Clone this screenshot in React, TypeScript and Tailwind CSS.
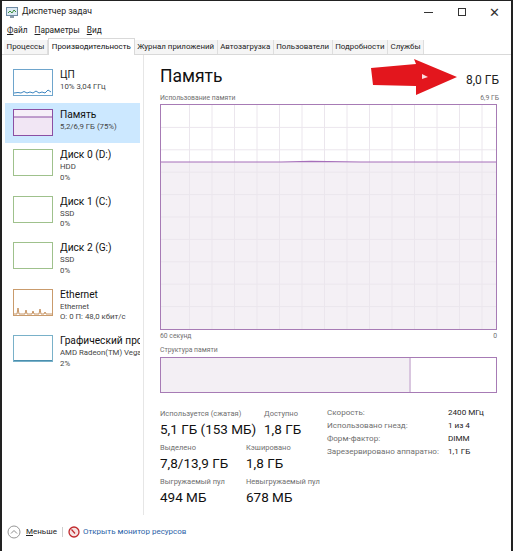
import React from 'react';

type Side = {
  title: string;
  lines: string[];
  color: string;
  kind: 'cpu' | 'mem' | 'flat' | 'net' | 'gpu';
  active?: boolean;
};

const sideItems: Side[] = [
  { title: 'ЦП', lines: ['10% 3,04 ГГц'], color: '#6ea5cc', kind: 'cpu' },
  { title: 'Память', lines: ['5,2/6,9 ГБ (75%)'], color: '#8b4fa3', kind: 'mem', active: true },
  { title: 'Диск 0 (D:)', lines: ['HDD', '0%'], color: '#9fc18c', kind: 'flat' },
  { title: 'Диск 1 (C:)', lines: ['SSD', '0%'], color: '#9fc18c', kind: 'flat' },
  { title: 'Диск 2 (G:)', lines: ['SSD', '0%'], color: '#9fc18c', kind: 'flat' },
  { title: 'Ethernet', lines: ['Ethernet', 'О: 0 П: 48,0 кбит/с'], color: '#c99b6c', kind: 'net' },
  { title: 'Графический процессор 0', lines: ['AMD Radeon(TM) Vega 8 Graphics', '2%'], color: '#79b1c9', kind: 'gpu' },
];

const tabs = ['Процессы', 'Производительность', 'Журнал приложений', 'Автозагрузка', 'Пользователи', 'Подробности', 'Службы'];

function Thumb({ item }: { item: Side }) {
  return (
    <svg width="40" height="27" className="shrink-0">
      <rect x="0.5" y="0.5" width="39" height="26" fill={item.active ? '#f6eff8' : 'white'} stroke={item.color} />
      {item.kind === 'cpu' && (
        <polyline
          points="1,24 5,23.5 8,24 11,22.5 14,24 17,23 20,24 23,22 26,24 29,23 32,24 35,21 38,23"
          fill="none"
          stroke="#3d86c0"
          strokeWidth="1"
        />
      )}
      {item.kind === 'mem' && (
        <>
          <rect x="1" y="8" width="38" height="18" fill="#f1e6f4" />
          <line x1="1" y1="8" x2="39" y2="8" stroke="#8b4fa3" />
        </>
      )}
      {item.kind === 'net' && (
        <polyline
          points="1,25 4,25 5,19 6,25 12,25 13,21 14,25 19,25 20,22 21,25 26,25 27,20 28,25 31,25 32,23 33,25 39,25"
          fill="none"
          stroke="#b77a3e"
          strokeWidth="0.8"
        />
      )}
      {item.kind === 'gpu' && <line x1="1" y1="25.5" x2="39" y2="25.5" stroke="#4a8fae" />}
    </svg>
  );
}

// usage chart: grid, current level and the filled area below it
function UsageChart() {
  const w = 335;
  const h = 224;
  const level = 57;
  const vx: number[] = [];
  for (let x = 28.5; x < w; x += 22.5) vx.push(x);
  const hy: number[] = [];
  for (let y = 22.4; y < h; y += 22.4) hy.push(y);
  return (
    <svg width={w} height={h} className="block">
      <rect x="0" y={level} width={w} height={h - level} fill="#f4f0f5" />
      {vx.map(x => (
        <line key={x} x1={x} y1="0" x2={x} y2={h} stroke="#ebe6ed" strokeWidth="1" />
      ))}
      {hy.map(y => (
        <line key={y} x1="0" y1={y} x2={w} y2={y} stroke="#ebe6ed" strokeWidth="1" />
      ))}
      <polyline points={`0,${level} 120,${level} 150,${level - 0.6} 200,${level} ${w},${level}`} fill="none" stroke="#a66fba" strokeWidth="1.2" />
    </svg>
  );
}

function Stat({ label, value, w }: { label: string; value: string; w: string }) {
  return (
    <div className={`${w} whitespace-nowrap`}>
      <div className="text-[7.5px] leading-[11px] text-[#6f6f6f]">{label}</div>
      <div className="text-[13.5px] leading-[20px] text-[#111]">{value}</div>
    </div>
  );
}

const App: React.FC = () => {
  return (
    <div className="w-[515px] h-[551px] bg-white overflow-hidden font-['Roboto',sans-serif] text-black relative">
      <div className="w-[513px] h-full border-l-2 border-r-2 border-t border-[#222] flex flex-col">
        {/* title bar */}
        <div className="h-[22px] flex items-center shrink-0">
          <svg width="12" height="11" className="ml-[4px] mr-[4px]">
            <rect x="0.5" y="0.5" width="11" height="8" fill="#dce9f3" stroke="#6e8aa3" />
            <polyline points="2,6 4,4 6,6 8,3 10,5" fill="none" stroke="#3b8e3b" strokeWidth="1" />
            <rect x="4" y="9" width="4" height="2" fill="#8a9aa8" />
          </svg>
          <span className="text-[8.7px] text-[#222]">Диспетчер задач</span>
          <div className="ml-auto flex items-center h-full">
            <div className="w-[33px] flex justify-center">
              <div className="w-[9px] h-px bg-[#333]" />
            </div>
            <div className="w-[33px] flex justify-center">
              <div className="w-[8px] h-[8px] border border-[#333]" />
            </div>
            <div className="w-[33px] flex justify-center text-[13px] leading-none text-[#333] font-light">✕</div>
          </div>
        </div>

        {/* menu */}
        <div className="h-[15px] flex items-center gap-[7px] pl-[5px] text-[8.3px] text-[#222] shrink-0">
          <span><span className="underline">Ф</span>айл</span>
          <span><span className="underline">П</span>араметры</span>
          <span><span className="underline">В</span>ид</span>
        </div>

        {/* tabs */}
        <div className="h-[17px] flex items-end border-b border-[#d9d9d9] pl-[2px] shrink-0 whitespace-nowrap">
          {tabs.map((t, i) =>
            i === 1 ? (
              <div key={t} className="h-[17px] px-[3px] flex items-center text-[7.9px] text-[#111] bg-white border border-b-0 border-[#d9d9d9] -mb-px relative">
                {t}
              </div>
            ) : (
              <div key={t} className="h-[14px] px-[2.5px] flex items-center text-[7.9px] text-[#222] bg-[#f5f5f5] border-r border-[#dedede]">
                {t}
              </div>
            )
          )}
        </div>

        <div className="flex-1 flex min-h-0">
          {/* sidebar */}
          <div className="w-[142px] shrink-0 border-r border-[#e6e6e6] pt-[8px] overflow-hidden">
            {sideItems.map(it => (
              <div
                key={it.title}
                className={`ml-[3px] w-[135px] flex items-start gap-[7px] pl-[8px] pt-[6px] overflow-hidden ${
                  it.lines.length === 1 ? 'h-[40px]' : 'h-[46.5px]'
                } ${it.active ? 'bg-[#cce8ff]' : ''}`}
              >
                <Thumb item={it} />
                <div className="min-w-0 whitespace-nowrap -mt-[1px] overflow-hidden">
                  <div className="text-[10.2px] leading-[14px] text-[#111]">{it.title}</div>
                  {it.lines.map(l => (
                    <div key={l} className="text-[7.8px] leading-[10.5px] text-[#444]">{l}</div>
                  ))}
                </div>
              </div>
            ))}
          </div>

          {/* main panel */}
          <div className="flex-1 pl-[16px] pr-[12px] pt-[8px] relative">
            <div className="flex items-end justify-between h-[27px]">
              <span className="text-[17.5px] leading-[27px] text-[#111]">Память</span>
              <span className="text-[12px] leading-[14px] mb-[3px] text-[#222]">8,0 ГБ</span>
            </div>
            <div className="flex justify-between text-[6.8px] leading-[12px] text-[#707070] mt-[2px]">
              <span>Использование памяти</span>
              <span>6,9 ГБ</span>
            </div>
            <div className="border border-[#a77bb5] w-[337px]">
              <UsageChart />
            </div>
            <div className="flex justify-between text-[6.8px] leading-[12px] text-[#707070] w-[337px]">
              <span>60 секунд</span>
              <span>0</span>
            </div>
            <div className="text-[6.8px] leading-[12px] text-[#707070] mt-[2px]">Структура памяти</div>
            <div className="border border-[#a77bb5] w-[337px] h-[36px] mt-[1px] flex">
              <div className="w-[250px] bg-[#f3eff4] border-r-2 border-[#d9c6df]" />
              <div className="flex-1 bg-white" />
            </div>

            <div className="flex mt-[15px]">
              <div className="w-[167px]">
                <div className="flex">
                  <Stat w="w-[104px]" label="Используется (сжатая)" value="5,1 ГБ (153 МБ)" />
                  <Stat w="w-[60px]" label="Доступно" value="1,8 ГБ" />
                </div>
                <div className="flex mt-[3px]">
                  <Stat w="w-[86px]" label="Выделено" value="7,8/13,9 ГБ" />
                  <Stat w="w-[80px]" label="Кэшировано" value="1,8 ГБ" />
                </div>
                <div className="flex mt-[3px]">
                  <Stat w="w-[86px]" label="Выгружаемый пул" value="494 МБ" />
                  <Stat w="w-[80px]" label="Невыгружаемый пул" value="678 МБ" />
                </div>
              </div>
              <div className="text-[8.1px] leading-[13px] text-[#6f6f6f] -mt-[2px] whitespace-nowrap">
                {[
                  ['Скорость:', '2400 МГц'],
                  ['Использовано гнезд:', '1 из 4'],
                  ['Форм-фактор:', 'DIMM'],
                  ['Зарезервировано аппаратно:', '1,1 ГБ'],
                ].map(([k, v]) => (
                  <div key={k} className="flex">
                    <span className="w-[121px]">{k}</span>
                    <span className="text-[#222]">{v}</span>
                  </div>
                ))}
              </div>
            </div>

            {/* red pointer arrow drawn on top of the header */}
            <svg width="92" height="40" className="absolute left-[225px] top-[3px]">
              <polygon points="2,10 47,6 45,1 88,19 47,37 47,28 4,27" fill="#e3161d" />
              <polygon points="53,16 59,19 53,21" fill="#ffffff" opacity="0.85" />
            </svg>
          </div>
        </div>

        {/* footer */}
        <div className="h-[36px] shrink-0 flex items-center pl-[5px] text-[8px] pb-[2px] whitespace-nowrap">
          <svg width="14" height="14" className="mr-[5px]">
            <circle cx="7" cy="7" r="6" fill="white" stroke="#8a8a8a" strokeWidth="0.9" />
            <polyline points="4,8.5 7,5.5 10,8.5" fill="none" stroke="#8a8a8a" strokeWidth="1" />
          </svg>
          <span className="text-[#222]"><span className="underline">М</span>еньше</span>
          <div className="w-px h-[10px] bg-[#cfcfcf] mx-[5px]" />
          <svg width="12" height="12" className="mr-[3px]">
            <circle cx="6" cy="6" r="5" fill="#f6e3e3" stroke="#c0282c" strokeWidth="1.3" />
            <line x1="3.5" y1="3.5" x2="7" y2="7.5" stroke="#c0282c" strokeWidth="1.2" />
          </svg>
          <span className="text-[#2c63a8]">Открыть монитор ресурсов</span>
        </div>
      </div>
    </div>
  );
};

export default App;
